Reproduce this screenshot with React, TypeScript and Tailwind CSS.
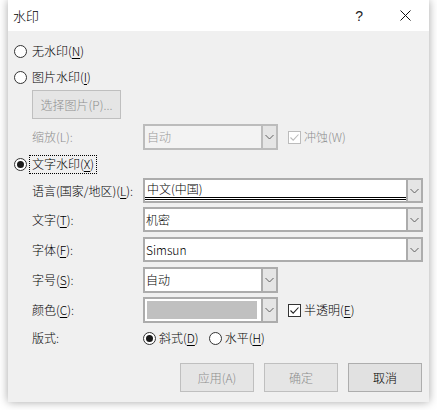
import React from "react";

function Radio({ checked = false }: { checked?: boolean }) {
  return (
    <span className="w-[13px] h-[13px] rounded-full border border-[#333333] bg-white flex items-center justify-center shrink-0">
      {checked && <span className="w-[7px] h-[7px] rounded-full bg-[#1a1a1a]" />}
    </span>
  );
}

function Checkbox({ checked = false, disabled = false }: { checked?: boolean; disabled?: boolean }) {
  return (
    <span
      className={
        disabled
          ? "w-[13px] h-[13px] border border-[#bcbcbc] bg-white flex items-center justify-center shrink-0"
          : "w-[13px] h-[13px] border border-[#333333] bg-white flex items-center justify-center shrink-0"
      }
    >
      {checked && (
        <svg width="11" height="11" viewBox="0 0 11 11">
          <polyline
            points="1.5,5.5 4.2,8.2 9.5,2.5"
            fill="none"
            stroke={disabled ? "#bcbcbc" : "#222222"}
            strokeWidth="1.1"
          />
        </svg>
      )}
    </span>
  );
}

function Chevron() {
  return (
    <svg width="9" height="6" viewBox="0 0 9 6">
      <polyline points="0.5,1 4.5,5 8.5,1" fill="none" stroke="#606060" strokeWidth="1" />
    </svg>
  );
}

function Arrow({ disabled = false }: { disabled?: boolean }) {
  return (
    <div
      className={
        disabled
          ? "w-[15px] self-stretch border-l-2 border-[#bcbcbc] bg-[#e5e5e5] flex items-center justify-center"
          : "w-[15px] self-stretch border-l-2 border-[#acacac] bg-[#e5e5e5] flex items-center justify-center"
      }
    >
      <Chevron />
    </div>
  );
}

function U({ children }: { children: React.ReactNode }) {
  return <span className="underline underline-offset-[2px] decoration-1">{children}</span>;
}

export default function App() {
  return (
    <div className="w-[437px] h-[410px] bg-white overflow-hidden font-['Noto_Sans_CJK_SC',sans-serif] font-light text-[12px] leading-none text-black">
      <div className="ml-[8px] w-[421px] h-[402px] bg-[#f0f0f0] shadow-[0_0_9px_rgba(0,0,0,0.35)] flex flex-col">
        {/* Title bar */}
        <div className="h-[31px] bg-white flex items-center pl-[5px]">
          <span className="text-[13px]">水印</span>
          <span className="ml-auto text-[14px] font-['Liberation_Sans',sans-serif] font-normal text-[#222222]">?</span>
          <svg className="ml-[37px] mr-[18px]" width="11" height="11" viewBox="0 0 11 11">
            <path d="M0.5 0.5 L10.5 10.5 M10.5 0.5 L0.5 10.5" stroke="#111111" strokeWidth="1" />
          </svg>
        </div>

        {/* Body */}
        <div className="flex flex-col pl-[6px] pr-[6px]">
          {/* 无水印 */}
          <div className="mt-[10px] h-[20px] flex items-center gap-[5px]">
            <Radio />
            <span>
              无水印(<U>N</U>)
            </span>
          </div>

          {/* 图片水印 */}
          <div className="mt-[6px] h-[20px] flex items-center gap-[5px]">
            <Radio />
            <span>
              图片水印(<U>I</U>)
            </span>
          </div>

          <div className="mt-[3px] ml-[18px] w-[89px] h-[29px] border border-[#bfbfbf] bg-[#e5e5e5] flex items-center justify-center text-[#8e8e8e]">
            选择图片(P)...
          </div>

          {/* 缩放 */}
          <div className="mt-[5px] h-[26px] flex items-center">
            <span className="ml-[18px] w-[111px] text-[#8e8e8e]">缩放(L):</span>
            <div className="w-[135px] h-[26px] border-2 border-[#bcbcbc] bg-[#f3f3f3] flex items-center">
              <span className="flex-1 pl-[2px] text-[#9a9a9a]">自动</span>
              <Arrow disabled />
            </div>
            <div className="ml-[10px] flex items-center gap-[3px] text-[#8e8e8e]">
              <Checkbox checked disabled />
              <span>冲蚀(W)</span>
            </div>
          </div>

          {/* 文字水印 */}
          <div className="mt-[4px] h-[20px] flex items-center gap-[2px]">
            <Radio checked />
            <span className="h-[19px] px-[2px] border border-dotted border-black flex items-center">
              文字水印(<U>X</U>)
            </span>
          </div>

          {/* 语言 */}
          <div className="mt-[4px] h-[25px] flex items-center">
            <span className="ml-[18px] w-[111px]">
              语言(国家/地区)(<U>L</U>):
            </span>
            <div className="w-[280px] h-[25px] border-2 border-[#acacac] bg-white flex">
              <div className="flex-1 flex flex-col">
                <span className="flex-1 pl-[2px] flex items-center">中文(中国)</span>
                <div className="mb-[1px] border-b-[3px] border-double border-black" />
              </div>
              <Arrow />
            </div>
          </div>

          {/* 文字 */}
          <div className="mt-[4px] h-[25px] flex items-center">
            <span className="ml-[18px] w-[111px]">
              文字(<U>T</U>):
            </span>
            <div className="w-[280px] h-[25px] border-2 border-[#acacac] bg-white flex items-center">
              <span className="flex-1 pl-[1px]">机密</span>
              <Arrow />
            </div>
          </div>

          {/* 字体 */}
          <div className="mt-[5px] h-[25px] flex items-center">
            <span className="ml-[18px] w-[111px]">
              字体(<U>F</U>):
            </span>
            <div className="w-[280px] h-[25px] border-2 border-[#acacac] bg-white flex items-center">
              <span className="flex-1 pl-[1px]">Simsun</span>
              <Arrow />
            </div>
          </div>

          {/* 字号 */}
          <div className="mt-[5px] h-[26px] flex items-center">
            <span className="ml-[18px] w-[111px]">
              字号(<U>S</U>):
            </span>
            <div className="w-[135px] h-[26px] border-2 border-[#acacac] bg-white flex items-center">
              <span className="flex-1 pl-[1px]">自动</span>
              <Arrow />
            </div>
          </div>

          {/* 颜色 */}
          <div className="mt-[4px] h-[26px] flex items-center">
            <span className="ml-[18px] w-[111px]">
              颜色(<U>C</U>):
            </span>
            <div className="w-[135px] h-[26px] border-2 border-[#acacac] bg-white flex items-center">
              <div className="flex-1 self-stretch p-[2px] pr-[4px] flex">
                <div className="flex-1 bg-[#c0c0c0]" />
              </div>
              <Arrow />
            </div>
            <div className="ml-[10px] flex items-center gap-[3px]">
              <Checkbox checked />
              <span>
                半透明(<U>E</U>)
              </span>
            </div>
          </div>

          {/* 版式 */}
          <div className="mt-[5px] h-[20px] flex items-center">
            <span className="ml-[18px] w-[111px]">版式:</span>
            <div className="flex items-center gap-[3px]">
              <Radio checked />
              <span>
                斜式(<U>D</U>)
              </span>
            </div>
            <div className="ml-[10px] flex items-center gap-[3px]">
              <Radio />
              <span>
                水平(<U>H</U>)
              </span>
            </div>
          </div>

          {/* Buttons */}
          <div className="mt-[15px] h-[29px] flex justify-end gap-[10px] pr-[1px]">
            <div className="w-[74px] h-[29px] border border-[#bfbfbf] bg-[#e5e5e5] flex items-center justify-center text-[#8e8e8e]">
              应用(A)
            </div>
            <div className="w-[74px] h-[29px] border border-[#bfbfbf] bg-[#e5e5e5] flex items-center justify-center text-[#8e8e8e]">
              确定
            </div>
            <div className="w-[74px] h-[29px] border border-[#adadad] bg-[#e1e1e1] flex items-center justify-center">
              取消
            </div>
          </div>
        </div>
      </div>
    </div>
  );
}
